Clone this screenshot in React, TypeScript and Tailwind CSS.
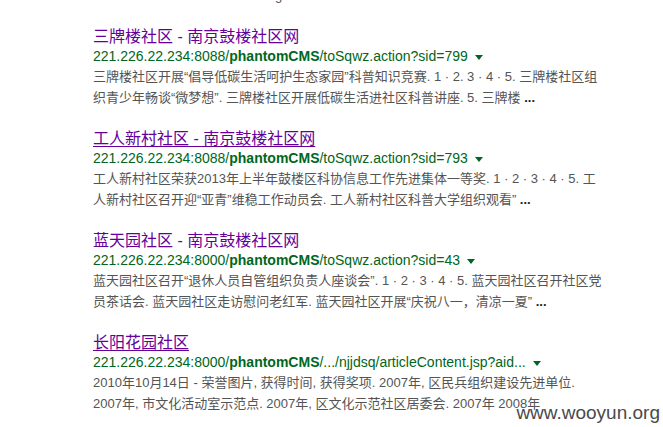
import React from "react";

type Result = {
  title: string;
  underline?: boolean;
  host: string;
  path: string;
  lines: [string, string];
  more?: boolean;
};

const results: Result[] = [
  {
    title: "三牌楼社区 - 南京鼓楼社区网",
    host: "221.226.22.234:8088/",
    path: "/toSqwz.action?sid=799",
    lines: [
      "三牌楼社区开展“倡导低碳生活呵护生态家园”科普知识竞赛. 1 · 2. 3 · 4 · 5. 三牌楼社区组",
      "织青少年畅谈“微梦想”. 三牌楼社区开展低碳生活进社区科普讲座. 5. 三牌楼",
    ],
    more: true,
  },
  {
    title: "工人新村社区 - 南京鼓楼社区网",
    underline: true,
    host: "221.226.22.234:8088/",
    path: "/toSqwz.action?sid=793",
    lines: [
      "工人新村社区荣获2013年上半年鼓楼区科协信息工作先进集体一等奖. 1 · 2 · 3 · 4 · 5. 工",
      "人新村社区召开迎“亚青”维稳工作动员会. 工人新村社区科普大学组织观看”",
    ],
    more: true,
  },
  {
    title: "蓝天园社区 - 南京鼓楼社区网",
    host: "221.226.22.234:8000/",
    path: "/toSqwz.action?sid=43",
    lines: [
      "蓝天园社区召开“退休人员自管组织负责人座谈会”. 1 · 2 · 3 · 4 · 5. 蓝天园社区召开社区党",
      "员茶话会. 蓝天园社区走访慰问老红军. 蓝天园社区开展“庆祝八一，清凉一夏”",
    ],
    more: true,
  },
  {
    title: "长阳花园社区",
    underline: true,
    host: "221.226.22.234:8000/",
    path: "/.../njjdsq/articleContent.jsp?aid...",
    lines: [
      "2010年10月14日 - 荣誉图片, 获得时间, 获得奖项. 2007年, 区民兵组织建设先进单位.",
      "2007年, 市文化活动室示范点. 2007年, 区文化示范社区居委会. 2007年 2008年",
    ],
  },
];

function ResultBlock({ r }: { r: Result }) {
  return (
    <div className="h-[102px]">
      <div
        className={
          "text-[16px] leading-[20px] text-[#660099] whitespace-nowrap " +
          (r.underline ? "underline underline-offset-2" : "")
        }
      >
        {r.title}
      </div>
      <div className="flex items-center text-[14px] leading-[19px] text-[#006621] whitespace-nowrap">
        <span>
          {r.host}
          <b>phantomCMS</b>
          {r.path}
        </span>
        <span className="ml-[7px] mt-[2px] border-x-[4px] border-t-[5px] border-x-transparent border-t-[#006621]" />
      </div>
      <div className="text-[13px] leading-[21px] text-[#545454] whitespace-nowrap">
        <div>{r.lines[0]}</div>
        <div>
          {r.lines[1]}
          {r.more && <b className="text-[#222]"> ...</b>}
        </div>
      </div>
    </div>
  );
}

export default function App() {
  return (
    <div
      className="relative h-[427px] w-[663px] overflow-hidden bg-white pl-[93px]"
      style={{ fontFamily: '"Liberation Sans", Arial, "Noto Sans CJK SC", sans-serif' }}
    >
      <div className="-mt-[15px] mb-[21px] text-[13px] leading-[21px] text-[#545454] whitespace-nowrap">
        name the 2015 12 21 - Wdchangescom...
      </div>
      {results.map((r) => (
        <ResultBlock key={r.title} r={r} />
      ))}
      <div className="absolute right-[3px] top-[402px] text-[19px] leading-[22px] text-[#4a4a4a]">
        www.wooyun.org
      </div>
    </div>
  );
}
